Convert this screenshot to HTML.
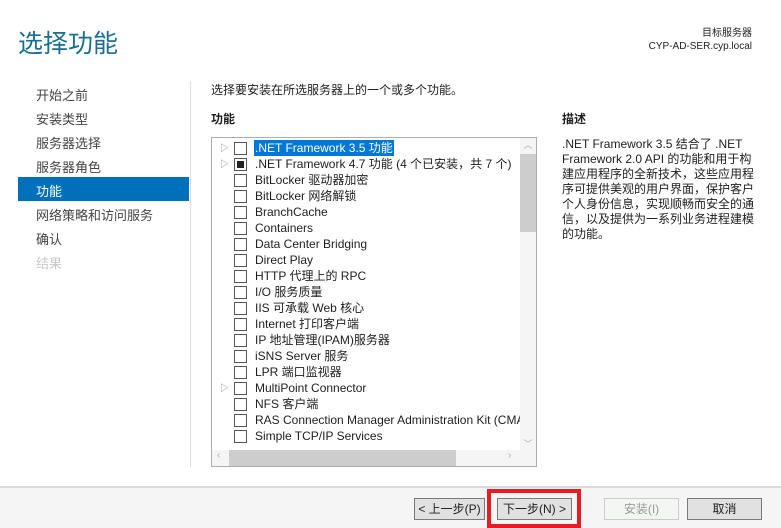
<!DOCTYPE html>
<html><head><meta charset="utf-8"><style>
*{margin:0;padding:0;box-sizing:border-box}
body{width:781px;height:528px;overflow:hidden;background:#fff;font-family:"Liberation Sans","Noto Sans CJK SC",sans-serif;font-size:12px;color:#1e1e1e;position:relative}
.a{position:absolute;white-space:nowrap}
.nav{left:36px;font-size:13px;color:#444}
.row{position:absolute;left:0;height:16px;line-height:16px;font-size:12px;white-space:nowrap}
.cb{position:absolute;left:22px;top:2px;width:13px;height:13px;border:1px solid #555;background:#fff}
.tx{position:absolute;left:43px;top:0}
.ar{position:absolute;left:8px;top:0;color:#888;font-size:9px}
.btn{position:absolute;top:498px;height:22px;border:1px solid #7a7a7a;background:#e1e1e1;text-align:center;line-height:20px;font-size:12px}
</style></head><body>
<div class="a" style="left:18px;top:24px;font-size:25px;color:#1a6e94">选择功能</div>
<div class="a" style="right:29px;top:27px;font-size:10px;text-align:right;line-height:13px">目标服务器<br>CYP-AD-SER.cyp.local</div>
<div class="a" style="left:190px;top:81px;width:1px;height:386px;background:#ddd"></div>
<div class="a nav" style="top:85px">开始之前</div>
<div class="a nav" style="top:109px">安装类型</div>
<div class="a nav" style="top:133px">服务器选择</div>
<div class="a nav" style="top:157px">服务器角色</div>
<div class="a" style="left:18px;top:177px;width:171px;height:24px;background:#0070ba"></div>
<div class="a nav" style="top:181px;color:#fff">功能</div>
<div class="a nav" style="top:205px">网络策略和访问服务</div>
<div class="a nav" style="top:229px">确认</div>
<div class="a nav" style="top:253px;color:#c8c8c8">结果</div>
<div class="a" style="left:211px;top:81px">选择要安装在所选服务器上的一个或多个功能。</div>
<div class="a" style="left:211px;top:110px;font-weight:bold">功能</div>
<div class="a" style="left:562px;top:110px;font-weight:bold">描述</div>
<div class="a" style="left:562px;top:137px;width:200px;white-space:normal;line-height:15px">.NET Framework 3.5 结合了 .NET Framework 2.0 API 的功能和用于构建应用程序的全新技术，这些应用程序可提供美观的用户界面，保护客户个人身份信息，实现顺畅而安全的通信，以及提供为一系列业务进程建模的功能。</div>
<div class="a" style="left:211px;top:137px;width:326px;height:330px;border:1px solid #adadad;overflow:hidden">
<div style="position:absolute;left:0;top:0;width:308px;height:312px;overflow:hidden">
<div class="row" style="top:2px;width:308px"><span class="ar">▷</span><span class="cb"></span><span class="tx" style="background:#0078d7;color:#fff;padding:0 1px;left:42px">.NET Framework 3.5 功能</span></div>
<div class="row" style="top:18px"><span class="ar">▷</span><span class="cb"><span style="position:absolute;left:2px;top:2px;width:7px;height:7px;background:#222"></span></span><span class="tx">.NET Framework 4.7 功能 (4 个已安装，共 7 个)</span></div>
<div class="row" style="top:34px"><span class="cb"></span><span class="tx">BitLocker 驱动器加密</span></div>
<div class="row" style="top:50px"><span class="cb"></span><span class="tx">BitLocker 网络解锁</span></div>
<div class="row" style="top:66px"><span class="cb"></span><span class="tx">BranchCache</span></div>
<div class="row" style="top:82px"><span class="cb"></span><span class="tx">Containers</span></div>
<div class="row" style="top:98px"><span class="cb"></span><span class="tx">Data Center Bridging</span></div>
<div class="row" style="top:114px"><span class="cb"></span><span class="tx">Direct Play</span></div>
<div class="row" style="top:130px"><span class="cb"></span><span class="tx">HTTP 代理上的 RPC</span></div>
<div class="row" style="top:146px"><span class="cb"></span><span class="tx">I/O 服务质量</span></div>
<div class="row" style="top:162px"><span class="cb"></span><span class="tx">IIS 可承载 Web 核心</span></div>
<div class="row" style="top:178px"><span class="cb"></span><span class="tx">Internet 打印客户端</span></div>
<div class="row" style="top:194px"><span class="cb"></span><span class="tx">IP 地址管理(IPAM)服务器</span></div>
<div class="row" style="top:210px"><span class="cb"></span><span class="tx">iSNS Server 服务</span></div>
<div class="row" style="top:226px"><span class="cb"></span><span class="tx">LPR 端口监视器</span></div>
<div class="row" style="top:242px"><span class="ar">▷</span><span class="cb"></span><span class="tx">MultiPoint Connector</span></div>
<div class="row" style="top:258px"><span class="cb"></span><span class="tx">NFS 客户端</span></div>
<div class="row" style="top:274px"><span class="cb"></span><span class="tx">RAS Connection Manager Administration Kit (CMAK)</span></div>
<div class="row" style="top:290px"><span class="cb"></span><span class="tx">Simple TCP/IP Services</span></div>
</div>
<div style="position:absolute;left:308px;top:0;width:16px;height:312px;background:#f5f5f5"><div style="position:absolute;left:0;top:16px;width:16px;height:78px;background:#cdcdcd"></div><div style="position:absolute;top:0;width:16px;text-align:center;color:#aaa;font-size:9px">︿</div><div style="position:absolute;bottom:0;width:16px;text-align:center;color:#aaa;font-size:9px">﹀</div></div>
<div style="position:absolute;left:0;top:312px;width:324px;height:16px;background:#f5f5f5"><div style="position:absolute;left:17px;top:0;width:227px;height:16px;background:#cdcdcd"></div><span style="position:absolute;left:5px;color:#aaa;font-size:10px">‹</span><span style="position:absolute;left:296px;color:#aaa;font-size:10px">›</span></div>
</div>
<div class="a" style="left:0;top:486px;width:781px;height:42px;background:#f5f5f5;border-top:2px solid #dadada"></div>
<div class="btn" style="left:414px;width:71px">&lt; 上一步(P)</div>
<div class="a" style="left:487px;top:489px;width:94px;height:39px;border:4px solid #e81c24"></div>
<div class="btn" style="left:497px;width:75px">下一步(N) &gt;</div>
<div class="btn" style="left:604px;width:75px;border-color:#ccc;background:#f4f6f4;color:#999">安装(I)</div>
<div class="btn" style="left:687px;width:75px">取消</div>
</body></html>
